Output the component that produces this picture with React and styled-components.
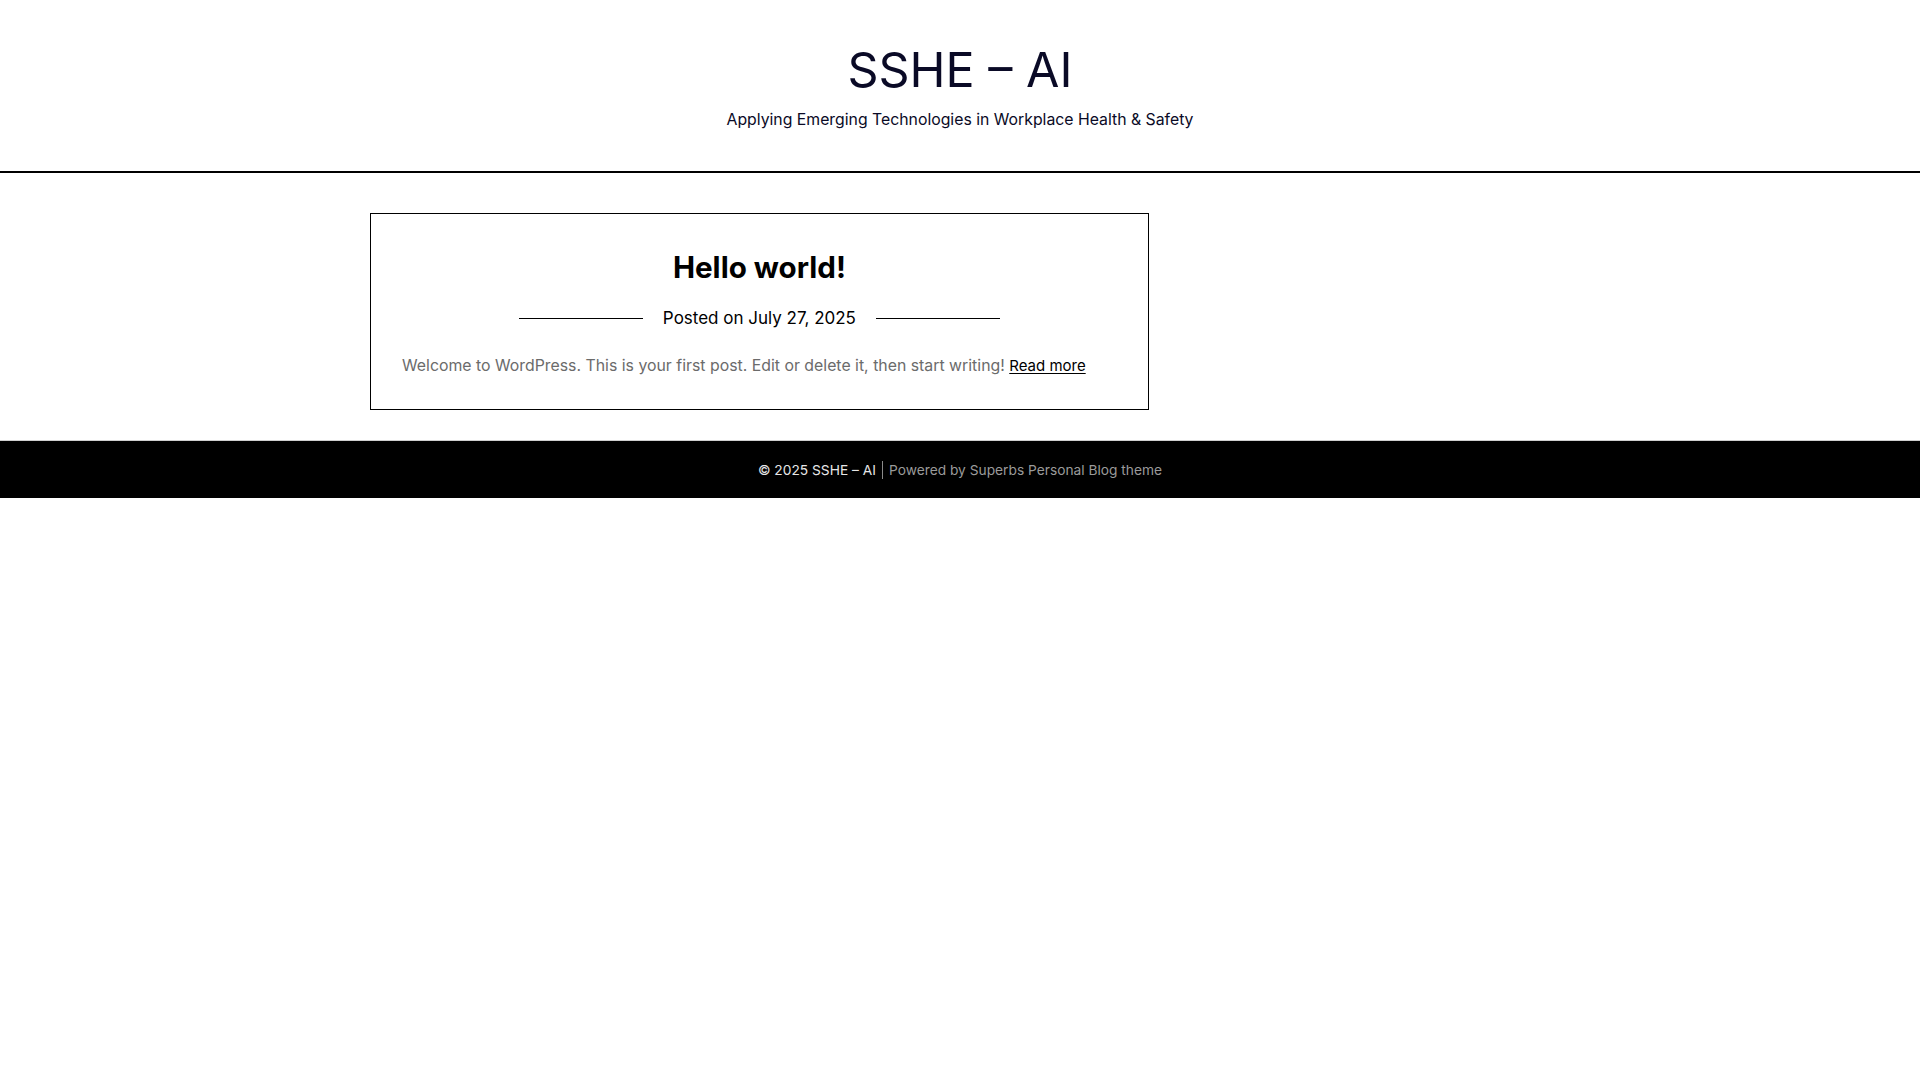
import React from "react";
import styled, { createGlobalStyle } from "styled-components";

const Global = createGlobalStyle`
  html, body { margin: 0; padding: 0; background: #fff; }
  body { font-family: Inter, "Noto Sans", Arial, sans-serif; color: #000; }
  * { box-sizing: border-box; }
`;

const Header = styled.header`
  padding: 40px 20px 39px;
  text-align: center;
  border-bottom: 2px solid #000;
`;

const SiteTitle = styled.h1`
  margin: 0;
  font-size: 48.4px;
  line-height: 60px;
  font-weight: 400;
  color: #0a0a26;
`;

const Tagline = styled.p`
  margin: 8px 0 0;
  font-size: 15.8px;
  line-height: 24px;
  color: #0a0a26;
`;

const Main = styled.main`
  width: 1180px;
  margin: 0 auto;
  padding: 40px 0 30px;
  display: grid;
  grid-template-columns: 66% 1fr;
`;

const Card = styled.article`
  border: 1px solid #000;
  padding: 34px 31px 31px;
`;

const PostTitle = styled.h2`
  margin: 0;
  text-align: center;
  font-size: 29.6px;
  line-height: 39px;
  font-weight: 700;
  color: #000;
`;

const Meta = styled.div`
  margin-top: 19px;
  display: flex;
  justify-content: center;
  align-items: center;
  gap: 20px;
  font-size: 17px;
  line-height: 24px;
  color: #000;
`;

const Rule = styled.span`
  width: 124px;
  height: 1px;
  background: #000;
`;

const Excerpt = styled.p`
  margin: 24px 0 0;
  font-size: 15.85px;
  line-height: 24px;
  color: #6b6b6b;
`;

const ReadMore = styled.a`
  color: #000;
  font-size: 15px;
  text-decoration: underline;
  text-underline-offset: 2px;
`;

const Footer = styled.footer`
  background: #000;
  border-top: 1px solid #cfcfcf;
  height: 58px;
  display: flex;
  justify-content: center;
  align-items: center;
  font-size: 13.75px;
`;

const Copy = styled.span`
  color: #e6e6e6;
`;

const Sep = styled.span`
  display: inline-block;
  width: 1px;
  height: 18px;
  background: #8a8a8a;
  margin: 0 6px;
`;

const Powered = styled.span`
  color: #9a9a9a;
`;

export default function App() {
  return (
    <>
      <Global />
      <Header>
        <SiteTitle>SSHE – AI</SiteTitle>
        <Tagline>Applying Emerging Technologies in Workplace Health &amp; Safety</Tagline>
      </Header>
      <Main>
        <Card>
          <PostTitle>Hello world!</PostTitle>
          <Meta>
            <Rule />
            <span>Posted on July 27, 2025</span>
            <Rule />
          </Meta>
          <Excerpt>
            Welcome to WordPress. This is your first post. Edit or delete it, then start writing!{" "}
            <ReadMore href="#">Read more</ReadMore>
          </Excerpt>
        </Card>
        <aside />
      </Main>
      <Footer>
        <Copy>© 2025 SSHE – AI</Copy>
        <Sep />
        <Powered>Powered by Superbs Personal Blog theme</Powered>
      </Footer>
    </>
  );
}
